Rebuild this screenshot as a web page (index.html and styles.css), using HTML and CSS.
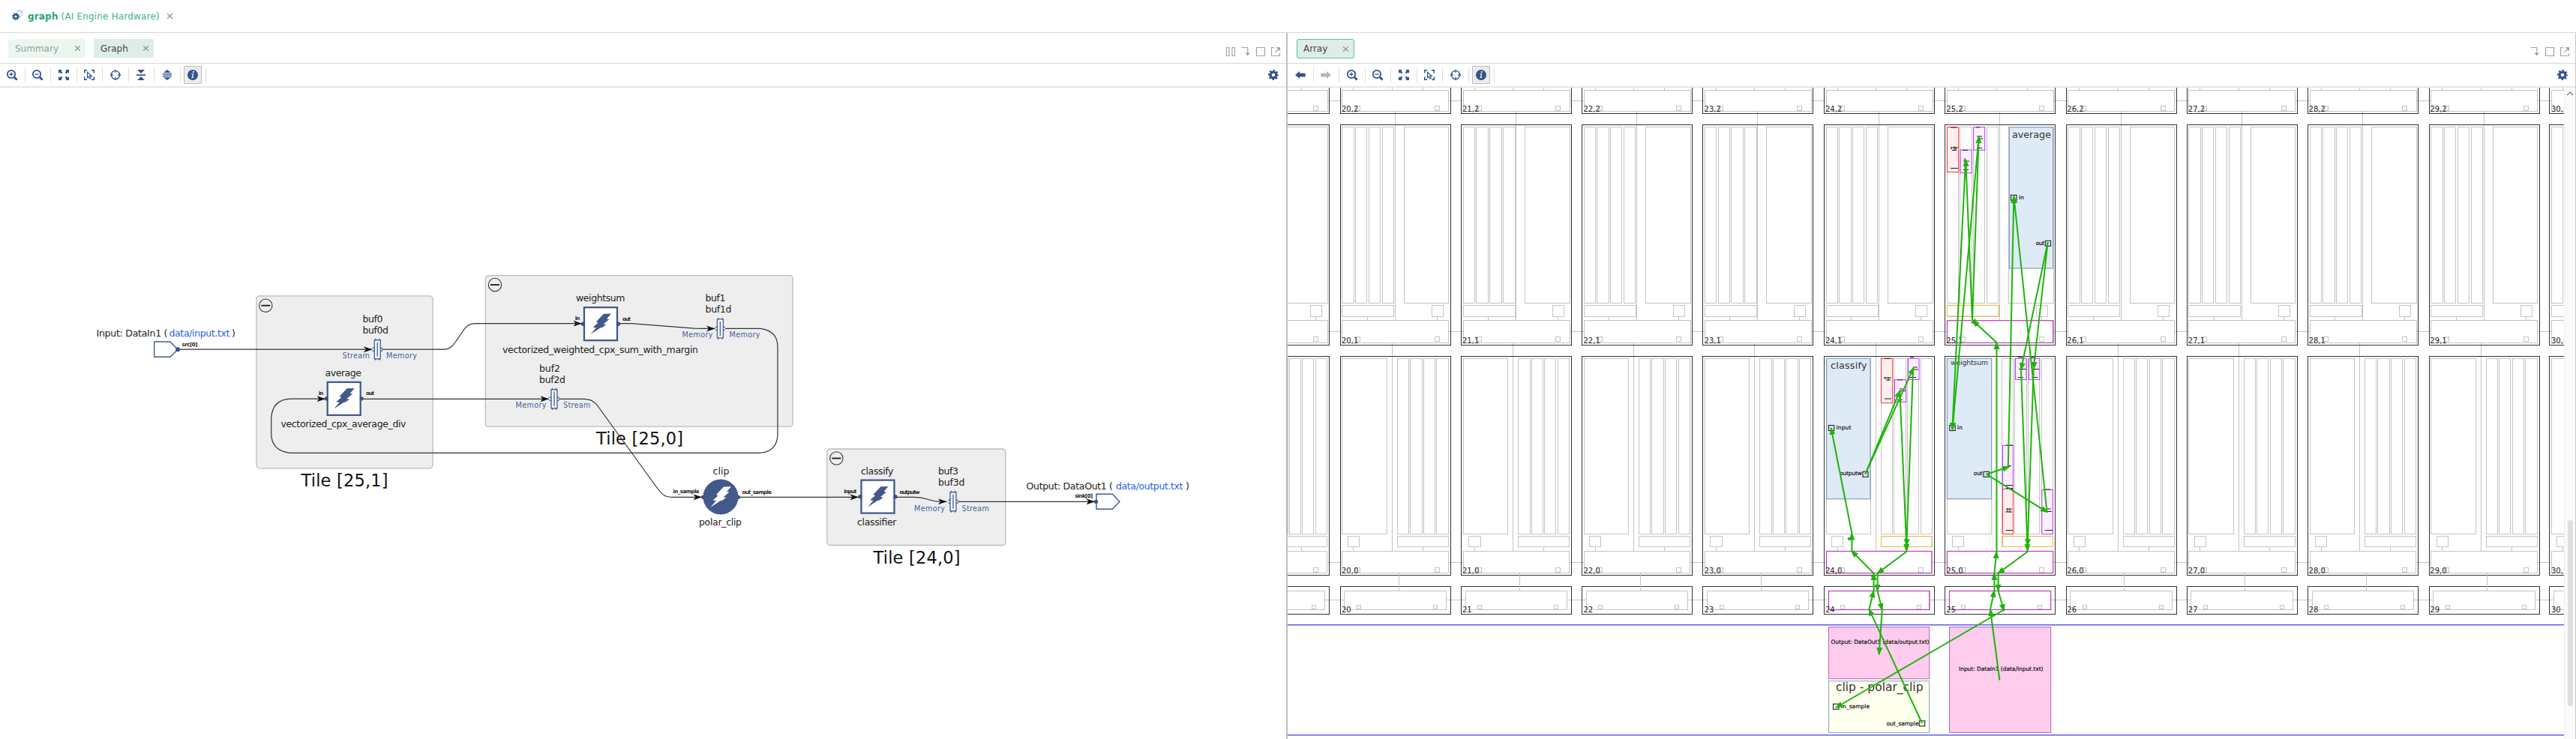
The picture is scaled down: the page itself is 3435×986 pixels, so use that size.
FILE: index.html
```html
<!DOCTYPE html>
<html lang="en">
<head>
<meta charset="utf-8">
<title>graph (AI Engine Hardware)</title>
<link rel="stylesheet" href="styles.css">
</head>
<body>
<svg class="sprite" aria-hidden="true">
  <symbol id="i-zoomin" viewBox="0 0 16 16"><circle cx="7" cy="7" r="5.2" fill="none" stroke="currentColor" stroke-width="1.8"/><path d="M11 11l3.6 3.6" stroke="currentColor" stroke-width="2.8"/><path d="M4.4 7h5.2M7 4.4v5.2" stroke="currentColor" stroke-width="1.3"/></symbol>
  <symbol id="i-zoomout" viewBox="0 0 16 16"><circle cx="7" cy="7" r="5.2" fill="none" stroke="currentColor" stroke-width="1.8"/><path d="M11 11l3.6 3.6" stroke="currentColor" stroke-width="2.8"/><path d="M4.4 7h5.2" stroke="currentColor" stroke-width="1.3"/></symbol>
  <symbol id="i-fit" viewBox="0 0 16 16"><path fill="currentColor" d="M1 1h5L4.400 2.600l2 2-1.800 1.800-2-2L1 6zM15 1v5l-1.600-1.600-2 2-1.800-1.800 2-2L10 1zM1 15v-5l1.600 1.600 2-2 1.800 1.800-2 2L6 15zM15 15h-5l1.600-1.600-2-2 1.800-1.800 2 2L15 10z"/></symbol>
  <symbol id="i-fitsel" viewBox="0 0 16 16"><path fill="none" stroke="currentColor" stroke-width="1.500" d="M1.700 5.500V1.700h3.300M11 1.700h3.300v3.800M1.700 10.500v3.800h3.300M11 14.300h3.300v-3.800"/><path fill="none" stroke="currentColor" stroke-width="1.100" d="M5.500 4.300v7.400l1.900-1.600 1.400 2.900 1.500-.7-1.400-2.800h2.400z"/></symbol>
  <symbol id="i-target" viewBox="0 0 16 16"><circle cx="8" cy="8" r="5.700" fill="none" stroke="currentColor" stroke-width="1.300"/><path d="M8 1v4M8 11v4M1 8h4M11 8h4" stroke="currentColor" stroke-width="1.300"/></symbol>
  <symbol id="i-collapse" viewBox="0 0 16 16"><path fill="currentColor" d="M3 1h10L8 6zM2 7.200h12v1.800H2zM8 10l5 5H3z"/></symbol>
  <symbol id="i-expand" viewBox="0 0 16 16"><path fill="currentColor" d="M8 1l5 4H3zM2 6h12v1.500H2zM2 8.700h12v1.500H2zM3 11.300h10L8 15z"/></symbol>
  <symbol id="i-info" viewBox="0 0 16 16"><circle cx="8" cy="8" r="7" fill="currentColor"/><path fill="#e9edf5" d="M8 3.100h2l-.4 1.900h-2zM6.400 6.200h2.900l-.9 4.700h1l-.2 1H6.100l.2-1h.7l.7-3.700H6.200z"/></symbol>
  <symbol id="i-back" viewBox="0 0 16 16"><path fill="currentColor" d="M1 8l6-5v2.700h7.700v4.700H7V13z"/></symbol>
  <symbol id="i-fwd" viewBox="0 0 16 16"><path fill="currentColor" d="M15 8L9 3v2.700H1.300v4.700H9V13z"/></symbol>
  <symbol id="i-gear" viewBox="0 0 16 16"><circle cx="8" cy="8" r="3.900" fill="none" stroke="currentColor" stroke-width="3.200"/><circle cx="8" cy="8" r="5.900" fill="none" stroke="currentColor" stroke-width="2.300" stroke-dasharray="2.350 2.284" stroke-dashoffset="1.175"/></symbol>
  <symbol id="i-columns" viewBox="0 0 14 14"><path fill="none" stroke="currentColor" stroke-width="1.200" d="M1.500 1.500h3.500v11H1.500zM9 1.500h3.500v11H9z"/></symbol>
  <symbol id="i-dock" viewBox="0 0 14 14"><path fill="none" stroke="currentColor" stroke-width="1.200" d="M1.500 1.500h8.300v8"/><path fill="currentColor" d="M6.500 8.500h6.300l-3.100 4z"/></symbol>
  <symbol id="i-max" viewBox="0 0 14 14"><path fill="none" stroke="currentColor" stroke-width="1.200" d="M1.500 1.500h11v11h-11z"/></symbol>
  <symbol id="i-float" viewBox="0 0 14 14"><path fill="none" stroke="currentColor" stroke-width="1.200" d="M5 1.500H1.500v11h11V9M6.500 8l4.500-4.500"/><path fill="currentColor" d="M7.500 1H13v5.500z"/></symbol>
  <symbol id="i-close" viewBox="0 0 10 10"><path fill="none" stroke="currentColor" stroke-width="1.600" d="M1.300 1.300l7.400 7.400M8.700 1.300l-7.400 7.400"/></symbol>
</svg>

<div class="app">
  <header class="titlebar">
    <svg class="app-icon" viewBox="0 0 14 15"><path d="M6.500 2.500C8 .8 12 .6 13 2c.5 3 .2 6-3 8.500" fill="none" stroke="#8aa5bd"/><circle cx="5" cy="9" r="2.700" fill="none" stroke="#1f588c" stroke-width="2.200"/><circle cx="5" cy="9" r="4.200" fill="none" stroke="#1f588c" stroke-width="1.600" stroke-dasharray="1.700 1.599"/></svg>
    <span class="title"><b>graph</b> (AI Engine Hardware)</span>
    <svg class="close"><use href="#i-close"/></svg>
  </header>

  <main class="panes">
    <section class="pane pane-graph">
      <div class="tabs">
        <div class="tab tab-summary"><span>Summary</span><svg class="close"><use href="#i-close"/></svg></div>
        <div class="tab tab-graph"><span>Graph</span><svg class="close"><use href="#i-close"/></svg></div>
        <div class="winicons"><svg><use href="#i-columns"/></svg><svg><use href="#i-dock"/></svg><svg><use href="#i-max"/></svg><svg><use href="#i-float"/></svg></div>
      </div>
      <div class="toolbar">
        <div class="tool"><svg><use href="#i-zoomin"/></svg></div>
        <div class="tool"><svg><use href="#i-zoomout"/></svg></div>
        <div class="tool"><svg><use href="#i-fit"/></svg></div>
        <div class="tool"><svg><use href="#i-fitsel"/></svg></div>
        <div class="tool"><svg><use href="#i-target"/></svg></div>
        <div class="tool"><svg><use href="#i-collapse"/></svg></div>
        <div class="tool"><svg><use href="#i-expand"/></svg></div>
        <div class="tool"><span class="pressed"><svg><use href="#i-info"/></svg></span></div>
        <svg class="gear"><use href="#i-gear"/></svg>
      </div>
      <svg class="canvas graph" viewBox="0 117 1715 869">
        <defs>
          <marker id="m-arrow" markerUnits="userSpaceOnUse" markerWidth="13" markerHeight="10" refX="11.500" refY="5" orient="auto"><path d="M0 1l11.500 4L0 9l3-4z" fill="#111"/></marker>
          <g id="bolt"><path d="M4-13.500L14-13.700 8-6.700 11.500-6.500 3.500.5 7.500.7 2.500 4.500-.500 5.200-13.500 13.700-6 5-10.500 4.500-3.500-1.500-6-3z"/></g>
          <g id="kernel"><path class="kbox" d="M-22-22h44v44h-44z"/><use href="#bolt" fill="#43598b"/><circle cx="-23.500" r="2.600" fill="#35528c"/><circle cx="23.500" r="2.600" fill="#35528c"/></g>
          <g id="buf" class="buf"><path d="M-4-12.500h8v25h-8z" fill="#f4f6fa"/><path d="M0-9.500v19M-2.500-14.500v2M2.500-14.500v2M-2.500 12.500v2M2.500 12.500v2M-6.500-2h2.500M-6.500 2h2.500M4-2h2.500M4 2h2.500"/></g>
          <g id="minus"><circle r="8.700" fill="none" stroke="#333" stroke-width="1.100"/><path d="M-6 0H6" stroke="#222" stroke-width="1.900"/></g>
        </defs>
        <g class="group">
          <rect x="342" y="394.800" width="235" height="230" rx="4"/>
          <rect x="647.300" y="367.600" width="409.700" height="201.600" rx="4"/>
          <rect x="1102.800" y="599" width="238" height="128.500" rx="4"/>
        </g>
        <use href="#minus" x="354.300" y="407.700"/><use href="#minus" x="660" y="380"/><use href="#minus" x="1115.400" y="611.500"/>

        <g class="tile">
          <text x="401.500" y="648.500" textLength="116">Tile [25,1]</text>
          <text x="795" y="593" textLength="116">Tile [25,0]</text>
          <text x="1164.500" y="751.500" textLength="116">Tile [24,0]</text>
        </g>

        <g class="wire">
          <path d="M237 466.200H496.500"/>
          <path d="M509 466.200H591C600 466.200 604 461 607.500 456L617.500 441.500C621 436 625 431.700 634 431.700H776"/>
          <path d="M825 431.700H842L926 438.200Q930 438.400 953.500 438.400"/>
          <path d="M967 438.400H1012Q1037 440 1037 463V580Q1036 603 1013 604.300H386Q361.700 601 361.700 578V558Q363 533 388 532.200H434"/>
          <path d="M482 532.300H732"/>
          <path d="M745 532.300H778C788 532.300 793 536 798 543L877 652C884 661.500 888 663.300 897 663.300H936"/>
          <path d="M984 663.300H1145"/>
          <path d="M1194 663.300H1220C1237 663.300 1237 669.300 1254 669.300H1262.500"/>
          <path d="M1277 669.300H1460"/>
        </g>

        <g class="port"><path d="M205.700 456H227L237 466.200 227 476.200H205.700z"/><path d="M1462 659.200H1483.500L1493 669.300 1483.500 679.300H1462z"/></g>
        <g fill="#35528c"><circle cx="237" cy="466.200" r="3"/><circle cx="1461.500" cy="669.300" r="2.600"/><circle cx="937.500" cy="663.300" r="2.600"/><circle cx="984.500" cy="663.300" r="2.600"/></g>

        <use href="#kernel" x="458.700" y="531.800"/><use href="#kernel" x="801" y="432.200"/><use href="#kernel" x="1170.500" y="662.700"/>
        <circle cx="961" cy="663" r="23.500" fill="#43598b"/><use href="#bolt" x="961" y="663" fill="#fff"/>
        <use href="#buf" x="503.300" y="466.300"/><use href="#buf" x="960.400" y="438.400"/><use href="#buf" x="739" y="532.300"/><use href="#buf" x="1271" y="669.300"/>

        <g class="name">
          <text x="128.500" y="449" textLength="95">Input: DataIn1 (</text><text class="link" x="225.500" y="449" textLength="81">data/input.txt</text><text x="309" y="449">)</text>
          <text x="483.500" y="429.700" textLength="27">buf0</text><text x="483.500" y="445" textLength="34.500">buf0d</text>
          <text x="433.500" y="501.700" textLength="48.500">average</text>
          <text x="374.500" y="570" textLength="167">vectorized_cpx_average_div</text>
          <text x="768" y="402.300" textLength="65.500">weightsum</text>
          <text x="670" y="470.700" textLength="261">vectorized_weighted_cpx_sum_with_margin</text>
          <text x="940.500" y="402.300" textLength="27">buf1</text><text x="940.500" y="417.300" textLength="35">buf1d</text>
          <text x="719" y="495.700" textLength="28">buf2</text><text x="719" y="510.700" textLength="35">buf2d</text>
          <text x="950.500" y="633" textLength="22">clip</text><text x="932" y="700.700" textLength="57">polar_clip</text>
          <text x="1148" y="633" textLength="43.500">classify</text><text x="1143" y="700.700" textLength="52.500">classifier</text>
          <text x="1251" y="633" textLength="27">buf3</text><text x="1251" y="647.700" textLength="35.500">buf3d</text>
          <text x="1368.500" y="652.700" textLength="115.500">Output: DataOut1 (</text><text class="link" x="1488" y="652.700" textLength="89.500">data/output.txt</text><text x="1581" y="652.700">)</text>
        </g>
        <g class="kind">
          <text x="456.500" y="477.800" textLength="36.500">Stream</text><text x="515" y="477.800" textLength="41">Memory</text>
          <text x="909.500" y="450" textLength="41">Memory</text><text x="972.500" y="450" textLength="41">Memory</text>
          <text x="687.500" y="543.800" textLength="41">Memory</text><text x="751" y="543.800" textLength="36.500">Stream</text>
          <text x="1219" y="681.500" textLength="41">Memory</text><text x="1282.500" y="681.500" textLength="36.500">Stream</text>
        </g>
        <g class="pin">
          <text x="242.500" y="461.800" textLength="21">src[0]</text><text x="424.800" y="526.800" textLength="6.500">in</text><text x="488" y="527.300" textLength="11">out</text>
          <text x="766.800" y="427.300" textLength="6.500">in</text><text x="830" y="428.300" textLength="11">out</text>
          <text x="897.500" y="657.500" textLength="35">in_sample</text><text x="989.500" y="658.500" textLength="39.500">out_sample</text>
          <text x="1125.300" y="657.500" textLength="17">input</text><text x="1199.500" y="658.500" textLength="27">outputw</text>
          <text x="1433.200" y="664.300" textLength="24">sink[0]</text>
        </g>
      </svg>
    </section>

    <section class="pane pane-array">
      <div class="tabs">
        <div class="tab tab-array"><span>Array</span><svg class="close"><use href="#i-close"/></svg></div>
        <div class="winicons"><svg><use href="#i-dock"/></svg><svg><use href="#i-max"/></svg><svg><use href="#i-float"/></svg></div>
      </div>
      <div class="toolbar">
        <div class="tool"><svg><use href="#i-back"/></svg></div>
        <div class="tool off"><svg><use href="#i-fwd"/></svg></div>
        <div class="tool"><svg><use href="#i-zoomin"/></svg></div>
        <div class="tool"><svg><use href="#i-zoomout"/></svg></div>
        <div class="tool"><svg><use href="#i-fit"/></svg></div>
        <div class="tool"><svg><use href="#i-fitsel"/></svg></div>
        <div class="tool"><svg><use href="#i-target"/></svg></div>
        <div class="tool"><span class="pressed"><svg><use href="#i-info"/></svg></span></div>
        <svg class="gear"><use href="#i-gear"/></svg>
      </div>
      <div class="view">
      <svg class="canvas array" viewBox="1717 117 1702 869">
        <defs>
          <marker id="m-net" markerUnits="userSpaceOnUse" markerWidth="12" markerHeight="10" refX="9" refY="5" orient="auto"><path d="M0 1L10.500 5 0 9z" fill="#1fb40a"/></marker>
          <g id="col">
            <g class="part">
              <path d="M17.700 117v3M69.300 117v3M110.300 117v3M73 149v278.500M36.300 422v5.500M129.300 422v5.500M69 458v277M17.700 730v5M110 730v5M145 134h19M145 442.400h19M145 750.200h19M141 800.400h25.500"/>
              <rect x="2.700" y="120.300" width="142" height="28.500"/><rect x="20.500" y="141.800" width="6.300" height="6"/><rect x="126" y="141.800" width="6.300" height="6"/>
              <rect x="2.700" y="169.700" width="15.300" height="234.300"/><rect x="20.500" y="169.700" width="15.300" height="234.300"/><rect x="38.300" y="169.700" width="15.300" height="234.300"/><rect x="56.300" y="169.700" width="15.300" height="234.300"/>
              <rect x="85.300" y="169.700" width="59.400" height="234.300"/><rect x="2.700" y="407.300" width="69" height="14.700"/><rect x="122" y="407.300" width="15.300" height="14.700"/>
              <rect x="2.700" y="427.700" width="142" height="30"/><rect x="20.500" y="449.500" width="6.300" height="6"/><rect x="126" y="449.500" width="6.300" height="6"/>
              <rect x="2.700" y="478.300" width="59.300" height="234.300"/><rect x="76.300" y="478.300" width="15.300" height="234.300"/><rect x="93.600" y="478.300" width="15.300" height="234.300"/><rect x="111.200" y="478.300" width="15.300" height="234.300"/><rect x="128.800" y="478.300" width="15.300" height="234.300"/>
              <rect x="10.300" y="715.500" width="15.300" height="14.200"/><rect x="76.300" y="715.500" width="68" height="14.200"/>
              <rect x="2.700" y="735.400" width="141.700" height="29.300"/><rect x="20.500" y="757.700" width="6.300" height="6"/><rect x="126" y="757.700" width="6.300" height="6"/>
              <rect x="5.700" y="788.400" width="135.300" height="25"/><rect x="22.500" y="807.400" width="5" height="5"/><rect x="124" y="807.400" width="5" height="5"/>
            </g>
            <g class="frame"><rect x="0" y="100" width="147" height="51.700"/><rect x="0" y="166.700" width="147" height="293.600"/><rect x="0" y="475.400" width="147" height="292"/><rect x="0" y="782.600" width="147" height="36.800"/></g>
          </g>
          <path id="drop" d="M77.700 765v23.500"/>
        </defs>
        <g class="grid">
          <use href="#col" x="1625.400"/><use href="#col" x="1787.200"/><use href="#col" x="1948.400"/><use href="#col" x="2109.400"/><use href="#col" x="2270.600"/><use href="#col" x="2432.400"/><use href="#col" x="2593.400"/><use href="#col" x="2755"/><use href="#col" x="2916"/><use href="#col" x="3077.400"/><use href="#col" x="3239"/><use href="#col" x="3399.600"/>
        </g>
        <g class="part"><use href="#drop" x="1787.300"/><use href="#drop" x="1948.500"/><use href="#drop" x="2109.700"/><use href="#drop" x="2270.900"/><use href="#drop" x="2755"/><use href="#drop" x="2916.200"/><use href="#drop" x="3077.500"/><use href="#drop" x="3239"/></g>
        <path d="M1717 833.800H3419M1717 980.700H3419" stroke="#5c5cf5" stroke-width="1.500"/>

        <g class="k"><rect x="2679.300" y="169.700" width="58.400" height="188.300"/><rect x="2435.700" y="478.200" width="58.300" height="187.500"/><rect x="2596.300" y="478.200" width="59.400" height="187.500"/></g>
        <g class="red"><rect x="2596.400" y="169.700" width="15.300" height="60"/><rect x="2508.400" y="478.200" width="15.300" height="59.500"/><rect x="2670.400" y="652.500" width="14" height="60.200"/></g>
        <g class="vio"><rect x="2614" y="200" width="15.300" height="30.700"/><rect x="2631.700" y="169.700" width="15" height="30.600"/><rect x="2526.400" y="506.700" width="15.300" height="29.700"/><rect x="2544.400" y="478.200" width="14.700" height="28.200"/><rect x="2670.400" y="594.400" width="14" height="58"/><rect x="2687.400" y="478.200" width="14.700" height="28.200"/><rect x="2705.400" y="478.200" width="14.400" height="28.200"/><rect x="2722.700" y="653.400" width="14.700" height="59.300"/></g>
        <g class="ora"><rect x="2596.400" y="407.300" width="68.600" height="14.600"/><rect x="2508.400" y="715.700" width="67.500" height="13.700"/><rect x="2670.400" y="715.700" width="67" height="13.700"/></g>
        <g class="mag"><rect x="2596.400" y="427.700" width="141.300" height="29.700"/><rect x="2435.600" y="735.500" width="140.300" height="29.200"/><rect x="2596.400" y="735.500" width="141.300" height="29.200"/><rect x="2438.500" y="788.500" width="134.200" height="25"/><rect x="2599.500" y="788.500" width="135.200" height="25"/></g>
        <g class="pink"><rect x="2438.500" y="836.700" width="134.200" height="69"/><rect x="2599.500" y="836.700" width="135.200" height="140.600"/></g>
        <rect class="cream" x="2438.500" y="908.700" width="134.200" height="68.600"/>

        <!-- compressed buffer captions -->
        <g class="tick">
          <path d="M2601 170h8M2601 197h10M2603 200.500h6M2602 196v3M2606 195v6M2608 196v5M2601 224.500h10M2617 200.500h7M2620 211v5M2618 215h8M2618 226.500h7M2635 169.800h5M2636 182h7M2637 185h7M2636 197.500h7"/>
          <path d="M2513 478.500h8M2512 504h10M2515 507h6M2514 503v3M2518 503v5M2513 532h9M2530 506.800h7M2533 519h7M2532 521.500h9M2530 533.500h7M2547 476.800h5M2551 490h6M2550 493h8M2547 503.500h8M2464 718h4v2h-3z"/>
          <path d="M2691 476.800h6M2692 492.500h10M2691 503.500h7M2709 476.800h6M2710 492.500h9M2709 503.500h8M2675 594h9M2678 621.500h4M2675 647.500h9M2675 651.500h9M2675 679h8M2674 683h9M2677 678v5M2680 679v5M2675 707.500h9M2727 653h7M2730 679h5M2727 682.500h9M2727 707.500h10M2657 769h4M2495 769h4"/>
        </g>

        <g class="num">
          <text x="1789" y="149">20,2</text><text x="1950" y="149">21,2</text><text x="2111.500" y="149">22,2</text><text x="2272.600" y="149">23,2</text><text x="2434" y="149">24,2</text><text x="2595.300" y="149">25,2</text><text x="2756.300" y="149">26,2</text><text x="2917.800" y="149">27,2</text><text x="3078.600" y="149">28,2</text><text x="3240.300" y="149">29,2</text><text x="3402" y="149">30,</text>
          <text x="1789" y="457.600">20,1</text><text x="1950" y="457.600">21,1</text><text x="2111.500" y="457.600">22,1</text><text x="2272.600" y="457.600">23,1</text><text x="2434" y="457.600">24,1</text><text x="2595.300" y="457.600">25,1</text><text x="2756.300" y="457.600">26,1</text><text x="2917.800" y="457.600">27,1</text><text x="3078.600" y="457.600">28,1</text><text x="3240.300" y="457.600">29,1</text><text x="3402" y="457.600">30,</text>
          <text x="1789" y="765">20,0</text><text x="1950" y="765">21,0</text><text x="2111.500" y="765">22,0</text><text x="2272.600" y="765">23,0</text><text x="2434" y="765">24,0</text><text x="2595.300" y="765">25,0</text><text x="2756.300" y="765">26,0</text><text x="2917.800" y="765">27,0</text><text x="3078.600" y="765">28,0</text><text x="3240.300" y="765">29,0</text><text x="3402" y="765">30,</text>
          <text x="1789" y="816.600">20</text><text x="1950" y="816.600">21</text><text x="2111.500" y="816.600">22</text><text x="2272.600" y="816.600">23</text><text x="2434" y="816.600">24</text><text x="2595.300" y="816.600">25</text><text x="2756.300" y="816.600">26</text><text x="2917.800" y="816.600">27</text><text x="3078.600" y="816.600">28</text><text x="3240.300" y="816.600">29</text><text x="3402" y="816.600">30</text>
        </g>
        <g class="kname">
          <text x="2683" y="183.700" textLength="52">average</text><text x="2441" y="491.700" textLength="48.500">classify</text><text class="small" x="2601" y="487.200" textLength="50">weightsum</text><text class="big" x="2448" y="922.300" textLength="116.500">clip - polar_clip</text>
        </g>
        <g class="pname">
          <text x="2692" y="265.800" textLength="7">in</text><text x="2714.800" y="326.600" textLength="11.500">out</text><text x="2448.500" y="573" textLength="20">input</text><text x="2453" y="634" textLength="30">outputw</text><text x="2610" y="573" textLength="7">in</text><text x="2631.800" y="634" textLength="12">out</text>
          <text x="2455" y="944.600" textLength="38">in_sample</text><text x="2515.500" y="967.700" textLength="43">out_sample</text>
          <text x="2441.500" y="858.500" textLength="131">Output: DataOut1 (data/output.txt)</text><text x="2612" y="895" textLength="112.500">Input: DataIn1 (data/input.txt)</text>
        </g>
        <g class="pbox"><rect x="2681.500" y="260.300" width="7.500" height="7"/><rect x="2727.300" y="321.300" width="7.300" height="7"/><rect x="2438.500" y="567.500" width="7.200" height="7"/><rect x="2484" y="629.300" width="7" height="7"/><rect x="2599.700" y="567.500" width="7.500" height="7"/><rect x="2645" y="629.300" width="7.500" height="7"/><rect x="2444.500" y="939.300" width="7.500" height="7"/><rect x="2559.300" y="961.800" width="7.400" height="7"/></g>

        <g class="net">
          <path d="M2630 427L2621.200 213"/><path d="M2630 427L2638.700 182"/><path d="M2621 214L2603.300 573"/><path d="M2638.500 184L2603.500 573"/>
          <path d="M2662.400 457L2630.500 427.500"/><path d="M2633 430L2637 434"/><path d="M2662.400 736V457"/>
          <path d="M2677.800 623L2685.400 262"/><path d="M2729.500 683L2685.400 262"/><path d="M2730.700 323L2695 493"/><path d="M2730.700 323L2711.700 492"/>
          <path d="M2695 493L2703.700 735"/><path d="M2711.700 492L2703.700 728"/><path d="M2703.700 736L2664.300 765"/><path d="M2664.600 765V788.500"/><path d="M2664.600 788.500L2672.300 815"/><path d="M2672.300 813.500L2448.300 944"/>
          <path d="M2666.400 907.500L2654 813"/><path d="M2654 813L2659.400 788"/><path d="M2659.400 788V765"/><path d="M2659.400 765L2662.400 736"/>
          <path d="M2648.700 632.700L2679.300 622.700"/><path d="M2648.700 632.700L2730 683.300"/>
          <path d="M2487.300 632.700L2533.400 521.500"/><path d="M2487.300 632.700L2551.700 490.700"/><path d="M2533.400 522L2542.500 735"/><path d="M2551 492L2542.300 728"/>
          <path d="M2542.300 736L2503.400 765"/><path d="M2503.600 765V788.500"/><path d="M2503.600 788.500L2509.700 814"/><path d="M2509.700 814L2505.700 873"/>
          <path d="M2563 965L2492.300 812.700"/><path d="M2492.300 813L2498.600 788.300"/><path d="M2498.600 788.300V765"/><path d="M2498.600 765L2469 735"/><path d="M2469.400 735V711.500"/><path d="M2469.400 711.500L2441.700 571"/>
        </g>
      </svg>
      <div class="scrollbar"><svg class="up" viewBox="0 0 10 6"><path d="M1 5l4-4 4 4" fill="none" stroke="#888" stroke-width="1.400"/></svg><div class="thumb"></div></div>
      </div>
    </section>
  </main>
</div>
</body>
</html>
```
FILE: styles.css
```css
* { box-sizing: border-box; }
body { margin: 0; background: #fff; font-family: "DejaVu Sans", Verdana, sans-serif; font-size: 12px; color: #444; overflow: hidden; }
svg { display: block; flex: none; }
.sprite { display: none; }
.app { display: flex; flex-direction: column; width: 3435px; height: 986px; }

.titlebar { display: flex; align-items: center; height: 44px; padding-left: 16px; border-bottom: 1px solid #d6d6d6; color: #3fb37c; flex: none; }
.app-icon { width: 14px; height: 15px; margin: 0 7px 3px 0; }
.title { white-space: pre; letter-spacing: 0.17px; }
.title b { color: #2ba36a; }
.close { width: 9px; height: 9px; color: #989c9a; }
.titlebar .close { margin-left: 9px; }

.panes { display: flex; flex: 1; min-height: 0; }
.pane { display: flex; flex-direction: column; min-width: 0; }
.pane-graph { width: 1717px; border-right: 2px solid #bdbdbd; }
.pane-array { width: 1718px; border-right: 1px solid #c8c8c8; }

.tabs { display: flex; align-items: flex-start; height: 41px; padding-top: 8px; border-bottom: 1px solid #d9d9d9; flex: none; }
.tab { display: flex; align-items: center; justify-content: space-between; height: 25px; padding: 0 6px 0 9px; border-radius: 2px; }
.tab-summary { width: 103px; margin-left: 11px; background: #eaf6ee; color: #979f9b; }
.tab-graph { width: 80px; margin-left: 11px; background: #deede6; }
.tab-array { width: 77px; height: 26px; margin-left: 12px; padding: 0 6px 0 8px; background: #deede6; border: 1px solid #5cc095; border-radius: 3px; }
.winicons { display: flex; gap: 6px; margin-left: auto; padding-top: 10px; color: #a3a3a3; }
.winicons svg { width: 14px; height: 14px; }
.pane-graph .winicons { padding-right: 7px; }
.pane-array .winicons { padding-right: 7px; }

.toolbar { display: flex; align-items: center; height: 32px; border-bottom: 2px solid #e6e6e6; color: #35528c; flex: none; }
.tool { display: flex; align-items: center; justify-content: center; width: 34.5px; height: 20px; border-right: 1px solid #dcdcdc; }
.tool svg, .gear { width: 16px; height: 16px; }
.pane-graph .tool:first-child { width: 33.5px; }
.off { color: #b5b5b5; }
.pressed { display: flex; align-items: center; justify-content: center; width: 24px; height: 24px; flex: none; background: #ececec; border: 1px solid #bcbcbc; border-radius: 1px; }
.gear { margin-left: auto; margin-right: 9px; }

.canvas { height: 869px; }
.graph { width: 1715px; }
.array { width: 1702px; }
.view { display: flex; flex: 1; }
.scrollbar { display: flex; flex-direction: column; align-items: center; width: 15px; background: #fafafa; border-left: 1px solid #eee; }
.up { width: 10px; height: 6px; margin-top: 5px; }
.thumb { width: 7px; height: 248px; margin-top: 566px; border-radius: 3px; background: #dedede; }

.group rect { fill: #eee; stroke: #bcbcbc; stroke-width: 1.3; }
.wire path { fill: none; stroke: #333; stroke-width: 1.2; marker-end: url(#m-arrow); }
.port path { fill: none; stroke: #43598b; stroke-width: 1.4; }
.kbox { fill: #fff; stroke: #43598b; stroke-width: 2.3; }
.buf path { stroke: #506799; stroke-width: 1.4; }
.name text { font-size: 12.5px; fill: #222; }
.name .link { fill: #2a63e6; }
.tile text { font-size: 22.5px; fill: #111; }
.kind text { font-size: 9.7px; fill: #4a6299; }
.pin text { font-size: 7px; font-weight: bold; fill: #222; }
text { white-space: pre; }

.part { fill: none; stroke: #c4c4c4; stroke-width: 1; shape-rendering: crispEdges; }
.frame { fill: none; stroke: #333; stroke-width: 1; shape-rendering: crispEdges; }
.num text { font-size: 10px; fill: #222; }
.k rect { fill: #deeaf6; stroke: #7590b0; }
.red rect { fill: #ffeeee; stroke: #f33; }
.vio rect { fill: #fdeeff; stroke: #b43cf5; }
.ora rect { fill: none; stroke: #eebd40; }
.mag rect { fill: none; stroke: #c03cc0; stroke-width: 1.2; }
.pink rect { fill: #ffccee; stroke: #b665b0; }
.cream { fill: #ffffee; stroke: #7ba7c0; }
.tick path { fill: none; stroke: #222; stroke-width: 1; }
.kname text { font-size: 12.7px; fill: #333; }
.kname .small { font-size: 9.3px; }
.kname .big { font-size: 15.5px; }
.pname text { font-size: 7.5px; fill: #111; stroke: #111; stroke-width: 0.2; }
.pbox rect { fill: none; stroke: #222; stroke-width: 1.1; }
.net path { fill: none; stroke: #1fb40a; stroke-width: 2; marker-end: url(#m-net); }
.net marker path { stroke: none; }
```
